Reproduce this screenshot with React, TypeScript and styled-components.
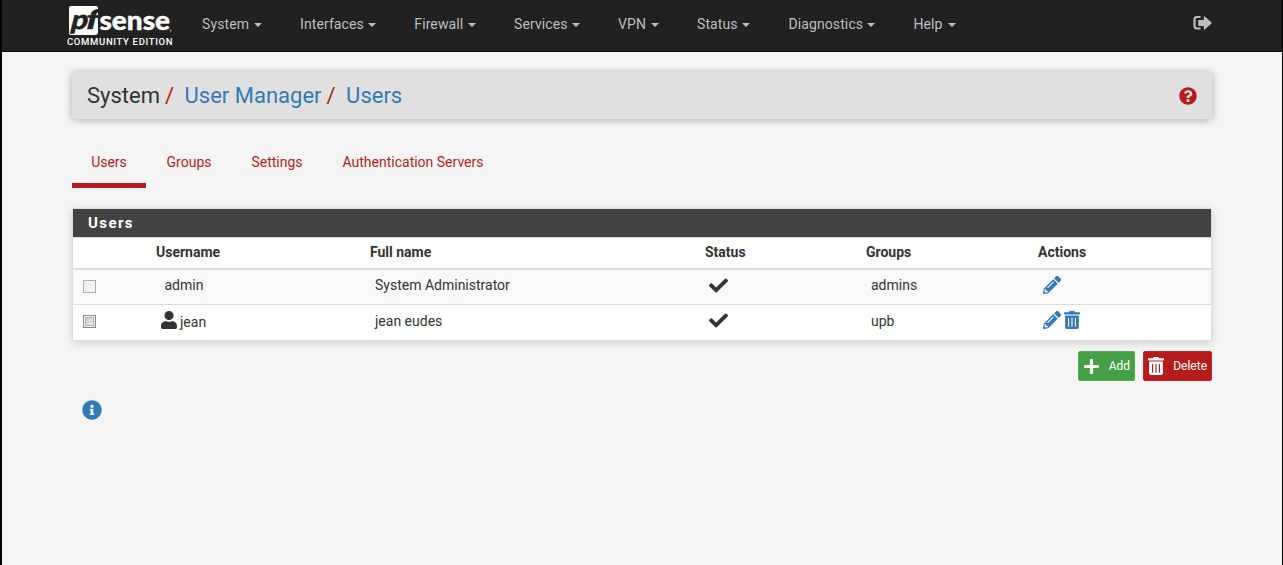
import React from "react";
import styled, { createGlobalStyle } from "styled-components";
import {
  FaCheck,
  FaInfoCircle,
  FaPencilAlt,
  FaPlus,
  FaQuestionCircle,
  FaTrashAlt,
  FaUser,
} from "react-icons/fa";

const GlobalStyle = createGlobalStyle`
  * { box-sizing: border-box; }
  body {
    margin: 0;
    background: #f5f5f5;
    color: #333;
    font: 14px/20px Roboto, "Liberation Sans", sans-serif;
  }
  a { color: inherit; text-decoration: none; }
  svg { display: block; flex: none; }
`;

const Page = styled.div`
  height: 565px;
  border-left: 2px solid #000;
  border-right: 1px solid #000;
  overflow: hidden;
`;

const Navbar = styled.header`
  display: flex;
  height: 52px;
  padding-left: 64px;
  background: #212121;
  border-bottom: 1px solid #080808;
`;

const Logo = styled.svg`
  width: 110px;
  height: 50px;
`;

const Menu = styled.nav`
  display: flex;
  align-items: flex-start;
  padding: 14px 0 0 26px;
  flex: 1;
`;

const MenuItem = styled.a<{ $width: number }>`
  display: flex;
  align-items: center;
  justify-content: space-between;
  width: ${(p) => p.$width}px;
  margin-right: 38px;
  color: #bdbdbd;
  letter-spacing: 0.1px;
  white-space: nowrap;
`;

const Caret = styled.span`
  margin-top: 2px;
  border: 4px solid transparent;
  border-top-color: #bdbdbd;
  border-bottom: 0;
`;

const Logout = styled.a`
  padding: 15px 70px 0 0;
  color: #bdbdbd;
`;

const Content = styled.main`
  width: 1140px;
  margin: 20px 0 0 70px;
`;

const Breadcrumb = styled.div`
  display: flex;
  align-items: center;
  height: 47px;
  padding: 1px 15px 0;
  background: #e0e0e0;
  border-radius: 2px;
  box-shadow: 0 1px 8px rgba(0, 0, 0, 0.3);
  font-size: 22px;
  line-height: 24px;
`;

const Crumb = styled.a<{ $link?: boolean }>`
  color: ${(p) => (p.$link ? "#337ab7" : "#333")};
`;

const Slash = styled.span`
  margin: 0 10.5px 0 5px;
  color: #b71c1c;
`;

const Help = styled.a`
  margin-left: auto;
  color: #b71c1c;
`;

const Tabs = styled.nav`
  display: flex;
  height: 37px;
  margin-top: 32px;
`;

const Tab = styled.a<{ $active?: boolean; $width: number }>`
  width: ${(p) => p.$width}px;
  padding-top: 1px;
  color: #b71c1c;
  text-align: center;
  white-space: nowrap;
  border-bottom: 5px solid ${(p) => (p.$active ? "#b71c1c" : "transparent")};
`;

const Panel = styled.section`
  margin-top: 20px;
  background: #fff;
  border: 1px solid #ddd;
  box-shadow: 0 2px 8px rgba(0, 0, 0, 0.16);
`;

const PanelTitle = styled.h2`
  height: 28px;
  margin: 0;
  padding-left: 15px;
  background: #424242;
  color: #fff;
  font-size: 15px;
  line-height: 28px;
  font-weight: 700;
  letter-spacing: 1.4px;
`;

const columns = "83px 214px 335px 161px 172px 1fr";

const HeadRow = styled.div`
  display: grid;
  grid-template-columns: ${columns};
  height: 33px;
  padding-top: 4px;
  border-top: 1px solid #ddd;
  border-bottom: 2px solid #ddd;
  font-weight: 700;
`;

const Row = styled.div<{ $striped?: boolean }>`
  display: grid;
  grid-template-columns: ${columns};
  height: 34px;
  padding-top: 5px;
  background: ${(p) => (p.$striped ? "#f9f9f9" : "#fff")};
  & + & {
    height: 36px;
    border-top: 1px solid #ddd;
  }
`;

const Cell = styled.div<{ $indent?: number }>`
  display: flex;
  height: 22px;
  align-items: flex-start;
  padding-left: ${(p) => p.$indent ?? 5}px;
`;

const Label = styled.span<{ $drop?: number }>`
  padding-top: ${(p) => p.$drop ?? 0}px;
`;

const UserName = styled.span`
  padding: 2px 0 0 3px;
`;

const Check = styled.span<{ $hover?: boolean }>`
  width: 13px;
  height: 13px;
  margin-top: 5px;
  border: 1px solid ${(p) => (p.$hover ? "#858585" : "#adadad")};
  background: ${(p) =>
    p.$hover
      ? "linear-gradient(135deg, #bcc0c8, #f6f6f6)"
      : "linear-gradient(135deg, #eaeaea, #fafafa)"};
  box-shadow: inset 0 0 0 1px #f4f4f4${(p) => (p.$hover ? ", inset 0 0 0 2px #b0b2b7" : "")};
`;

const Action = styled.a`
  margin: 1px 3px 0 0;
  color: #337ab7;
`;

const StatusMark = styled.span`
  margin-top: 1px;
`;

const Buttons = styled.div`
  display: flex;
  justify-content: flex-end;
  gap: 8px;
  margin-top: 10px;
`;

const Button = styled.button<{ $fill: string; $edge: string; $width: number }>`
  display: flex;
  align-items: center;
  justify-content: space-between;
  width: ${(p) => p.$width}px;
  height: 30px;
  padding: 0 4px;
  background: ${(p) => p.$fill};
  border: 1px solid ${(p) => p.$edge};
  border-radius: 2px;
  color: #fff;
  font: 12px/18px Roboto, sans-serif;
`;

const Info = styled.a`
  display: flex;
  width: 20px;
  margin: 19px 0 0 10px;
  color: #337ab7;
`;

const menu: [string, number][] = [
  ["System", 60],
  ["Interfaces", 76.3],
  ["Firewall", 61.7],
  ["Services", 66],
  ["VPN", 41],
  ["Status", 53.5],
  ["Diagnostics", 87],
  ["Help", 43],
];

const TrashIcon = ({ width = 16, height = 18 }) => (
  <FaTrashAlt style={{ width, height }} preserveAspectRatio="none" />
);

export default function App() {
  return (
    <>
      <GlobalStyle />
      <Page>
        <Navbar>
          <Logo viewBox="66 0 110 50">
            <path d="M71 6h25q2 0 2 2v24q0 3-3 3H71q-2 0-2-2V8q0-2 2-2z" fill="#fff" />
            <g transform="translate(0 28.500) skewX(-14)" fill="#212121" stroke="#212121" strokeWidth="0.400" fontFamily="Lato" fontWeight="900" fontSize="27">
              <text x="69.500" y="0" textLength="17" lengthAdjust="spacingAndGlyphs">p</text>
              <text x="84" y="0" textLength="13" lengthAdjust="spacingAndGlyphs">f</text>
            </g>
            <text x="99.500" y="29.500" fontFamily="Lato" fontWeight="900" fontSize="27" textLength="70.500" lengthAdjust="spacingAndGlyphs" fill="#fff" stroke="#fff" strokeWidth="0.400">sense</text>
            <circle cx="170.500" cy="30.500" r="1" fill="#999" />
            <text x="67" y="45" fontFamily="Roboto" fontWeight="500" fontSize="9.500" textLength="105.500" fill="#fff">COMMUNITY EDITION</text>
          </Logo>
          <Menu>
            {menu.map(([label, width]) => (
              <MenuItem key={label} $width={width}>
                {label}
                <Caret />
              </MenuItem>
            ))}
          </Menu>
          <Logout>
            <svg width="19" height="16" viewBox="0 0 19 16">
              <path d="M7.500 2H4Q1.500 2 1.500 4.500v6.500q0 2.500 2.500 2.500h3.500" fill="none" stroke="currentColor" strokeWidth="2.200" />
              <path d="M5.200 5h5.600V1.900q0-1.300 1-.4l6.600 5.800q.6.600 0 1.300L11.800 14.400q-1 .8-1-.5V11H5.200z" fill="currentColor" />
            </svg>
          </Logout>
        </Navbar>
        <Content>
          <Breadcrumb>
            <Crumb>System</Crumb>
            <Slash>/</Slash>
            <Crumb $link>User Manager</Crumb>
            <Slash>/</Slash>
            <Crumb $link>Users</Crumb>
            <Help><FaQuestionCircle size={18} /></Help>
          </Breadcrumb>
          <Tabs>
            <Tab $active $width={74}>Users</Tab>
            <Tab $width={86}>Groups</Tab>
            <Tab $width={90}>Settings</Tab>
            <Tab $width={182}>Authentication Servers</Tab>
          </Tabs>
          <Panel>
            <PanelTitle>Users</PanelTitle>
            <HeadRow>
              <span />
              <span>Username</span>
              <span>Full name</span>
              <span>Status</span>
              <span>Groups</span>
              <span>Actions</span>
            </HeadRow>
            <Row $striped>
              <Cell $indent={10}><Check /></Cell>
              <Cell $indent={8.5}><Label>admin</Label></Cell>
              <Cell><Label>System Administrator</Label></Cell>
              <Cell $indent={4}><StatusMark><FaCheck size={19} /></StatusMark></Cell>
              <Cell><Label>admins</Label></Cell>
              <Cell><Action><FaPencilAlt size={18} /></Action></Cell>
            </Row>
            <Row>
              <Cell $indent={10}><Check $hover /></Cell>
              <Cell><FaUser style={{ width: 16, height: 18, marginTop: 1 }} preserveAspectRatio="none" /><UserName>jean</UserName></Cell>
              <Cell><Label $drop={1}>jean eudes</Label></Cell>
              <Cell $indent={4}><StatusMark><FaCheck size={19} /></StatusMark></Cell>
              <Cell><Label $drop={1}>upb</Label></Cell>
              <Cell>
                <Action><FaPencilAlt size={18} /></Action>
                <Action><TrashIcon /></Action>
              </Cell>
            </Row>
          </Panel>
          <Buttons>
            <Button $fill="#43a047" $edge="#4caf50" $width={57}><FaPlus size={17} />Add</Button>
            <Button $fill="#b71c1c" $edge="#c62828" $width={69}><TrashIcon />Delete</Button>
          </Buttons>
          <Info><FaInfoCircle size={20} /></Info>
        </Content>
      </Page>
    </>
  );
}
